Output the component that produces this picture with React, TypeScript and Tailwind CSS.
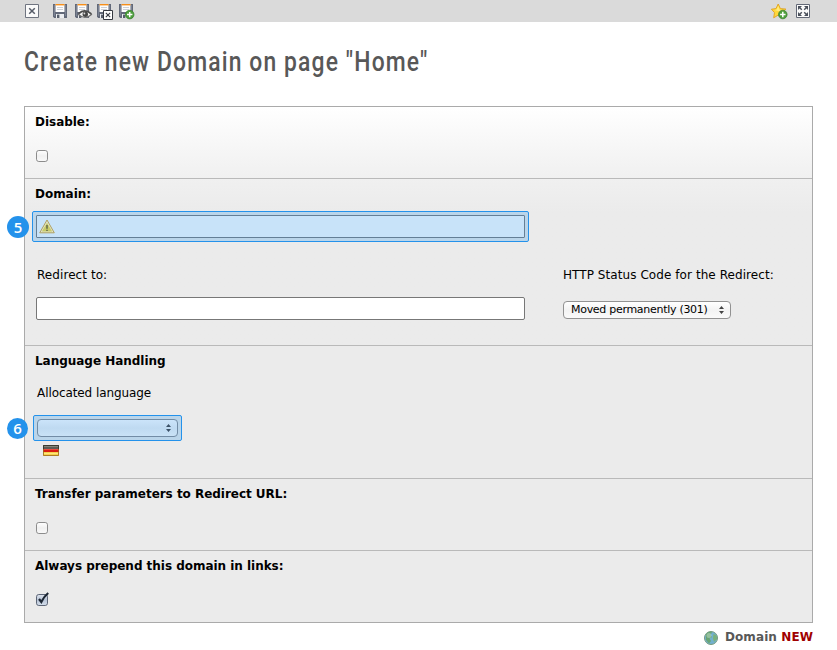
import type { ReactNode } from "react";

function Floppy({ children }: { children?: ReactNode }) {
  return (
    <svg width="18" height="16" viewBox="0 0 18 16" className="block">
      <path d="M0 0h14v14H1.2L0 12.8z" fill="#626979" />
      <path d="M1 1h1v11H1zM12 1h1v11h-1z" fill="#7c8393" />
      <path d="M2.5 0h9v8h-9z" fill="#fdfdfd" />
      <path d="M2.5 0h9v1.4h-9z" fill="#f78f1a" />
      <path d="M4 3.5h6M4 5.5h6" stroke="#cdd0d6" />
      <path d="M3 10h8v4H3z" fill="#eceef1" />
      <path d="M4 10.6h2.4V14H4z" fill="#565d6b" />
      {children}
    </svg>
  );
}

function Plus({ x, y }: { x: number; y: number }) {
  return (
    <g transform={`translate(${x} ${y})`}>
      <circle r="4.3" fill="#4d9e3c" stroke="#35802b" strokeWidth=".7" />
      <path d="M-2.7 0h5.4M0-2.7v5.4" stroke="#fff" strokeWidth="1.5" />
    </g>
  );
}

function Label({ children }: { children: ReactNode }) {
  return <div className="ml-[10px] h-4 whitespace-nowrap text-[12px] leading-4 font-bold tracking-[-0.03px]">{children}</div>;
}

function Check({ checked = false }: { checked?: boolean }) {
  return (
    <svg width="14" height="14" viewBox="0 0 14 14" className="mt-[18px] ml-[11px] block">
      <defs>
        <linearGradient id={checked ? "boxOn" : "boxOff"} x1="0" y1="0" x2="0" y2="1">
          <stop offset="0" stopColor={checked ? "#dfe5ee" : "#ffffff"} />
          <stop offset=".5" stopColor={checked ? "#b8c4d6" : "#f0f0f0"} />
          <stop offset="1" stopColor={checked ? "#d4deeb" : "#fafafa"} />
        </linearGradient>
      </defs>
      <rect x=".5" y="2.5" width="11" height="11" rx="2.3" fill={checked ? "url(#boxOn)" : "url(#boxOff)"} stroke={checked ? "#5d6677" : "#8c8c8c"} />
      {checked && <path d="M3 7L5.3 10Q8 4.5 12.2 1" fill="none" stroke="#1c2633" strokeWidth="2.2" />}
    </svg>
  );
}

function Arrows({ color }: { color: string }) {
  return (
    <svg width="5" height="8" viewBox="0 0 5 8" className="block">
      <path d="M2.5 0L5 3H0zM2.5 8L0 5h5z" fill={color} />
    </svg>
  );
}

function Badge({ children, className }: { children: ReactNode; className: string }) {
  return (
    <div className={"absolute flex items-center justify-center rounded-full bg-[#2492eb] font-['Open_Sans',sans-serif] text-[15px] leading-none font-semibold text-white " + className}>
      {children}
    </div>
  );
}

export default function App() {
  return (
    <div className="h-[650px] w-[837px] overflow-hidden bg-white font-['DejaVu_Sans',sans-serif] text-[12px] text-black">
      <header className="flex h-[22px] items-start bg-[#dadada] pt-1 pl-[25px]">
        <svg width="14" height="14" viewBox="0 0 14 14" className="mr-[14px] block">
          <path d="M.5.5h13v13H.5z" fill="#fafafa" stroke="#6f7480" />
          <path d="M4.2 4.2l5.6 5.6M9.8 4.2L4.2 9.8" stroke="#565c68" strokeWidth="1.5" />
        </svg>
        <div className="flex gap-1">
          <Floppy />
          <Floppy>
            <path d="M3.5 10.5Q9.5 4 16.5 10.5Q10 16.5 3.5 10.5z" fill="#f3f3f3" stroke="#6b6b6b" strokeWidth="1.1" />
            <path d="M3.5 9.5Q9.5 3.8 16.5 9.8" fill="none" stroke="#4a4a4a" strokeWidth="1.3" />
            <circle cx="10.3" cy="10.3" r="2.7" fill="#464646" />
            <circle cx="9.4" cy="9.5" r=".9" fill="#ddd" />
          </Floppy>
          <Floppy>
            <path d="M6.5 6.5h9v9h-9z" fill="#fff" stroke="#343840" />
            <path d="M8.8 8.8l4.4 4.4M13.2 8.8l-4.4 4.4" stroke="#343840" strokeWidth="1.1" />
          </Floppy>
          <Floppy><Plus x={10.7} y={10.6} /></Floppy>
        </div>
        <svg width="17" height="17" viewBox="0 0 17 17" className="mt-[-1px] ml-auto block">
          <path d="M7.2 1L9.4 5.6l5.5.5-4 3.5 1.2 5-4.9-2.5-4.5 2.7.8-5.2L0.4 6.2l4.6-.6z" fill="#ffd83a" stroke="#e0a020" strokeWidth=".9" />
          <path d="M7.2 2.8L8.6 6.7l3.4.2-3 1.7-5.4-1.5 2-.6z" fill="#ffec80" />
          <Plus x={11.8} y={11.5} />
        </svg>
        <svg width="14" height="14" viewBox="0 0 14 14" className="mr-[27px] ml-2 block">
          <path d="M.5.5h13v13H.5z" fill="#fafafa" stroke="#626876" />
          <path d="M2 6V2h4zM8 2H12v4zM12 8V12H8zM6 12H2V8z" fill="#4a505b" />
          <path d="M3 3l2.8 2.8M11 3L8.2 5.8M11 11L8.2 8.2M3 11l2.8-2.8" stroke="#4a505b" strokeWidth="1.4" />
        </svg>
      </header>

      <h1 className="mt-[22px] ml-6 h-[36px] w-[404px] text-[28px] leading-[36px] font-medium whitespace-nowrap text-[#585858]">
        <span className="inline-block origin-left scale-x-[0.816] font-['Roboto',sans-serif] tracking-[1.4px]">Create new Domain on page "Home"</span>
      </h1>

      <main className="mt-[26px] ml-6 h-[517px] w-[789px] border border-[#aaa] bg-[#ebebeb]">
        <section className="h-[72px] border-b border-[#b9b9b9] bg-linear-to-b from-white to-[#f0f0f0] pt-[7px]">
          <Label>Disable:</Label>
          <Check />
        </section>

        <section className="h-[167px] border-b border-[#b9b9b9] bg-linear-to-b from-[#f0f0f0] to-[#ebebeb] to-20% pt-[7px]">
          <Label>Domain:</Label>
          <div className="relative mt-[9px] ml-[7px] h-[31px] w-[497px] rounded-[2px] border border-[#2492eb] bg-[#bad5ea] p-[3px]">
            <Badge className="top-[4px] left-[-26px] size-[22px]">5</Badge>
            <div className="flex h-[23px] items-center rounded-[1px] border border-[#647f96] bg-[#c8e3f9] pl-[2px]">
              <svg width="16" height="15" viewBox="0 0 16 15" className="block">
                <path d="M8 1L15.3 13.8H.7z" fill="#e1e4cd" stroke="#b0a05f" strokeLinejoin="round" />
                <path d="M8 3.7L13.2 12.5H2.8z" fill="#c9cb68" />
                <path d="M8 6v3.7M8 10.7v1.4" stroke="#626847" strokeWidth="1.5" />
              </svg>
            </div>
          </div>
          <div className="mt-[25px] flex pl-[11px]">
            <div className="w-[527px]">
              <div className="ml-px leading-4 tracking-[0.07px]">Redirect to:</div>
              <div className="mt-[14px] h-[23px] w-[489px] rounded-[2px] border border-[#777] bg-white" />
            </div>
            <div>
              <div className="leading-4 tracking-[0.07px] whitespace-nowrap">HTTP Status Code for the Redirect:</div>
              <div className="mt-[18px] flex h-[18px] w-[168px] items-center justify-between rounded-[4px] border border-[#929292] bg-linear-to-b from-white via-[#f3f3f3] to-[#fafafa] pr-[6px] pl-[7px] text-[11px] whitespace-nowrap">
                <span className="tracking-[-0.29px]">Moved permanently (301)</span>
                <Arrows color="#444" />
              </div>
            </div>
          </div>
        </section>

        <section className="h-[133px] border-b border-[#b9b9b9] pt-[7px]">
          <Label>Language Handling</Label>
          <div className="mt-4 ml-3 leading-4 tracking-[-0.08px]">Allocated language</div>
          <div className="relative mt-[14px] ml-2 h-[26px] w-[149px] rounded-[2px] border border-[#2492eb] bg-[#bad5ea] p-[3px]">
            <Badge className="top-[2px] left-[-27px] size-[21px]">6</Badge>
            <div className="flex h-[18px] items-center justify-end rounded-[4px] border border-[#728ca5] bg-linear-to-b from-[#cbe4fa] via-[#bfdaf1] to-[#c9e2f6] pr-[6px]">
              <Arrows color="#3b5268" />
            </div>
          </div>
          <svg width="16" height="11" viewBox="0 0 16 11" className="mt-1 ml-[18px] block">
            <path d="M0 0h16v4H0z" fill="#5d5d55" />
            <path d="M0 4h16v3H0z" fill="#d81b12" />
            <path d="M0 7h16v4H0z" fill="#f6d24a" />
            <path d="M1 1h14v1H1z" fill="#858578" />
            <path d="M1 4h14v1H1z" fill="#ed4a3c" />
            <path d="M1 8h14v1H1z" fill="#ffe67e" />
            <path d="M.5 4V.5h15V4" fill="none" stroke="#3c3c30" />
            <path d="M.5 4v6.5h15V4" fill="none" stroke="#9a661c" strokeOpacity=".8" />
          </svg>
        </section>

        <section className="h-[72px] border-b border-[#b9b9b9] pt-[7px]">
          <Label>Transfer parameters to Redirect URL:</Label>
          <Check />
        </section>

        <section className="h-[71px] pt-[7px]">
          <Label>Always prepend this domain in links:</Label>
          <Check checked />
        </section>
      </main>

      <footer className="mt-[6px] mr-6 flex justify-end">
        <svg width="14" height="14" viewBox="0 0 14 14" className="mt-[2px] mr-[7px] block shrink-0">
          <circle cx="7" cy="7" r="6.5" fill="#72b0ce" stroke="#75997c" />
          <path d="M2 3Q6-.5 8 1.5L6.5 4 8 6 5.5 7.5 7 10 5 12.5 2 9z" fill="#68a574" />
          <path d="M9.5 3L12.5 4.5 13 8l-3 3-1-3.5z" fill="#79b17b" />
          <circle cx="5" cy="4.5" r="2.5" fill="#fff" fillOpacity=".3" />
        </svg>
        <div className="text-[12px] leading-4 font-bold tracking-[0.09px] whitespace-nowrap text-[#585858]">Domain <span className="text-[#a00000]">NEW</span></div>
      </footer>
    </div>
  );
}
